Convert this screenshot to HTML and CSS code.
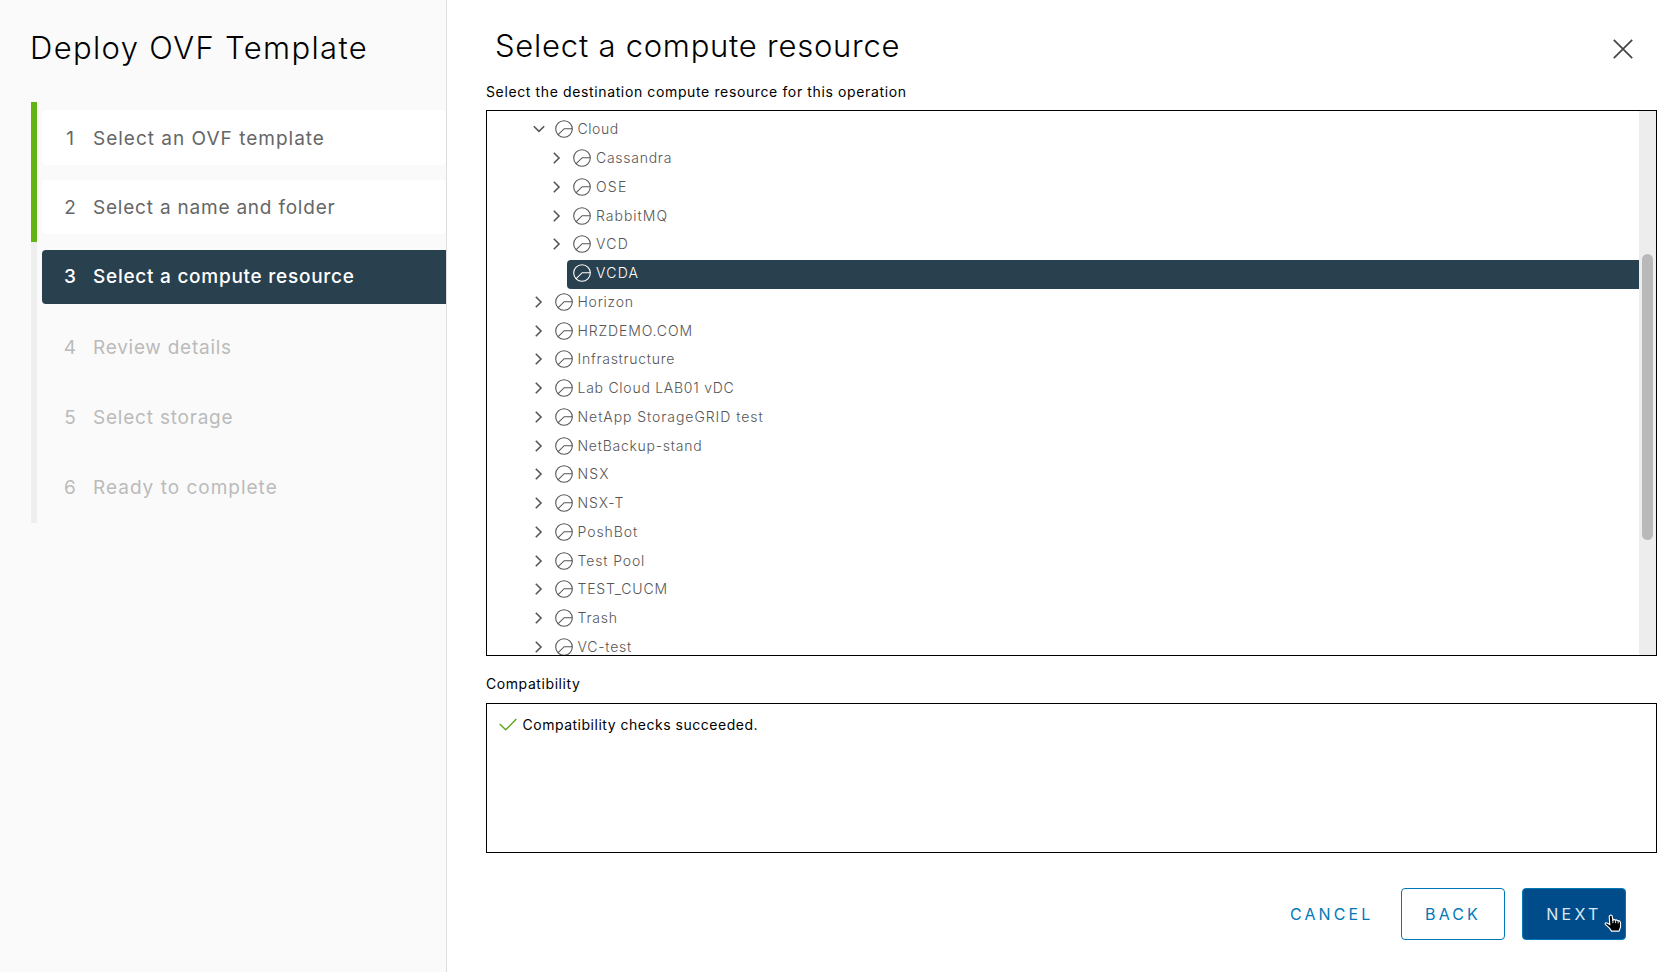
FILE: index.html
```html
<!DOCTYPE html>
<html lang="en">
<head>
<meta charset="utf-8">
<title>Deploy OVF Template</title>
<link rel="stylesheet" href="styles.css">
</head>
<body>
<svg class="sprite" aria-hidden="true">
  <symbol id="pool" viewBox="0 0 18 18"><circle cx="9" cy="9" r="8.3"/><path d="M2.9 14.8 9.2 8.7h8"/></symbol>
  <symbol id="right" viewBox="0 0 12 12"><path d="M2.8 .8 8 6l-5.2 5.2"/></symbol>
  <symbol id="down" viewBox="0 0 12 12"><path d="M.8 3.2 6 8.3l5.2-5.1"/></symbol>
</svg>
<div class="wizard">
  <aside class="sidebar">
    <h1 class="sidebar-title">Deploy OVF Template</h1>
    <ol class="steps">
      <li class="step done"><div class="card"><span class="num">1</span><span class="k10">Select an OVF template</span></div></li>
      <li class="step done"><div class="card"><span class="num">2</span><span class="k8">Select a name and folder</span></div></li>
      <li class="step active"><div class="card"><span class="num">3</span><span class="k7">Select a compute resource</span></div></li>
      <li class="step"><div class="card"><span class="num">4</span><span class="k7">Review details</span></div></li>
      <li class="step"><div class="card"><span class="num">5</span><span class="k8">Select storage</span></div></li>
      <li class="step"><div class="card"><span class="num">6</span><span class="k10">Ready to complete</span></div></li>
    </ol>
  </aside>
  <main class="main">
    <header class="head">
      <h2 class="page-title">Select a compute resource</h2>
      <svg class="close" viewBox="0 0 20 20"><path d="M.8.8l18.4 18.4M19.2.8.8 19.2"/></svg>
    </header>
    <p class="desc">Select the destination compute resource for this operation</p>
    <div class="tree">
      <div class="rows">
        <div class="row"><svg class="caret"><use href="#down"/></svg><div class="item"><svg class="pool"><use href="#pool"/></svg><span class="k6">Cloud</span></div></div>
        <div class="row child"><svg class="caret"><use href="#right"/></svg><div class="item"><svg class="pool"><use href="#pool"/></svg><span class="k7">Cassandra</span></div></div>
        <div class="row child"><svg class="caret"><use href="#right"/></svg><div class="item"><svg class="pool"><use href="#pool"/></svg><span class="k12">OSE</span></div></div>
        <div class="row child"><svg class="caret"><use href="#right"/></svg><div class="item"><svg class="pool"><use href="#pool"/></svg><span class="k10">RabbitMQ</span></div></div>
        <div class="row child"><svg class="caret"><use href="#right"/></svg><div class="item"><svg class="pool"><use href="#pool"/></svg><span class="k12">VCD</span></div></div>
        <div class="row child"><span class="caret"></span><div class="item selected"><svg class="pool"><use href="#pool"/></svg><span class="k12">VCDA</span></div></div>
        <div class="row"><svg class="caret"><use href="#right"/></svg><div class="item"><svg class="pool"><use href="#pool"/></svg><span class="k7">Horizon</span></div></div>
        <div class="row"><svg class="caret"><use href="#right"/></svg><div class="item"><svg class="pool"><use href="#pool"/></svg><span class="k9">HRZDEMO.COM</span></div></div>
        <div class="row"><svg class="caret"><use href="#right"/></svg><div class="item"><svg class="pool"><use href="#pool"/></svg><span class="k7">Infrastructure</span></div></div>
        <div class="row"><svg class="caret"><use href="#right"/></svg><div class="item"><svg class="pool"><use href="#pool"/></svg><span class="k7">Lab Cloud LAB01 vDC</span></div></div>
        <div class="row"><svg class="caret"><use href="#right"/></svg><div class="item"><svg class="pool"><use href="#pool"/></svg><span class="k95">NetApp StorageGRID test</span></div></div>
        <div class="row"><svg class="caret"><use href="#right"/></svg><div class="item"><svg class="pool"><use href="#pool"/></svg><span class="k7">NetBackup-stand</span></div></div>
        <div class="row"><svg class="caret"><use href="#right"/></svg><div class="item"><svg class="pool"><use href="#pool"/></svg><span class="k12">NSX</span></div></div>
        <div class="row"><svg class="caret"><use href="#right"/></svg><div class="item"><svg class="pool"><use href="#pool"/></svg><span class="k9">NSX-T</span></div></div>
        <div class="row"><svg class="caret"><use href="#right"/></svg><div class="item"><svg class="pool"><use href="#pool"/></svg><span class="k95">PoshBot</span></div></div>
        <div class="row"><svg class="caret"><use href="#right"/></svg><div class="item"><svg class="pool"><use href="#pool"/></svg><span class="k9">Test Pool</span></div></div>
        <div class="row"><svg class="caret"><use href="#right"/></svg><div class="item"><svg class="pool"><use href="#pool"/></svg><span class="k8">TEST_CUCM</span></div></div>
        <div class="row"><svg class="caret"><use href="#right"/></svg><div class="item"><svg class="pool"><use href="#pool"/></svg><span class="k8">Trash</span></div></div>
        <div class="row"><svg class="caret"><use href="#right"/></svg><div class="item"><svg class="pool"><use href="#pool"/></svg><span class="k8">VC-test</span></div></div>
      </div>
      <div class="track"><div class="thumb"></div></div>
    </div>
    <p class="compat-label">Compatibility</p>
    <div class="compat">
      <svg class="check" viewBox="0 0 18 13"><path d="M.7 6 6.7 11.8 17.3 1"/></svg>
      <span>Compatibility checks succeeded.</span>
    </div>
    <footer class="foot">
      <button class="btn link">CANCEL</button>
      <button class="btn outline">BACK</button>
      <button class="btn primary">NEXT
        <svg class="cursor" viewBox="0 0 18 19"><path d="M6.2 1.2c.9-.5 1.8 0 2 1l.7 4 1-.7 1.4.6 1.1-.2 1.3.8 1.3-.2 1.5 1.6v5l-1.5 4H7.5l-2-3-4.2-3.7c-.7-1.2.5-2 1.6-1.5l2.9 1.6L5.2 2.5c0-.6.4-1 1-1.3z"/><path class="knuckles" d="M8.9 6v3.2M11.6 6.4v2.8M14.2 7v2.4"/></svg>
      </button>
    </footer>
  </main>
</div>
</body>
</html>
```
FILE: styles.css
```css
* { box-sizing: border-box; }
body { margin: 0; background: #fff; color: #000; font: 400 14px/20px Inter, sans-serif; overflow: hidden; }
h1, h2, p, ol { margin: 0; padding: 0; }
.sprite { display: none; }
svg { fill: none; stroke: currentColor; flex: none; }
.wizard { display: flex; height: 972px; }

.sidebar { width: 447px; flex: none; background: #fafafa; border-right: 1px solid #ddd; padding: 29px 0 0 31px; }
.sidebar-title { margin-left: -1px; font-size: 31px; line-height: 38px; font-weight: 300; letter-spacing: 1.35px; height: 73px; white-space: nowrap; }
.steps { list-style: none; }
.step { height: 70px; padding: 8px 0 0 5px; border-left: 6px solid #eee; color: #bbb; font-size: 19px; }
.step:last-child { height: 71px; }
.step.done { border-color: #60b515; color: #666; }
.card { height: 54px; padding-top: 2px; border-radius: 4px; display: flex; align-items: center; white-space: nowrap; }
.done .card { background: #fff; }
.done:first-child .card { height: 55px; }
.active .card { background: #29404e; color: #fff; border-radius: 4px 0 0 4px; font-weight: 500; padding-top: 0; }
.num { width: 28px; margin: 0 9px 0 14px; text-align: center; }

.main { flex: 1; min-width: 0; padding: 27px 1px 0 39px; }
.head { display: flex; justify-content: space-between; height: 55px; padding: 0 24px 0 9px; }
.page-title { font-size: 31px; line-height: 38px; font-weight: 300; letter-spacing: .76px; white-space: nowrap; }
.close { width: 20px; height: 20px; margin-top: 12px; stroke: #454545; stroke-width: 1.7; }
.desc { height: 28px; letter-spacing: .626px; }

.tree { height: 546px; border: 1px solid #000; display: flex; overflow: hidden; color: #565656; font-weight: 300; }
.rows { flex: 1; padding-top: 5px; }
.row { height: 28.76px; display: flex; align-items: center; padding-left: 46px; }
.row.child { padding-left: 64px; }
.caret { width: 12px; height: 12px; margin: 0 4px 2px 0; stroke-width: 1.6; stroke: #565656; }
.item { flex: 1; height: 100%; display: flex; align-items: center; gap: 5px; padding: 0 0 2px 5.5px; white-space: nowrap; }
.child .item { padding-left: 6px; }
.item.selected { background: #29404e; color: #fff; border-radius: 4px 0 0 4px; }
.pool { width: 18px; height: 18px; stroke-width: 1.1; }
.track { width: 17px; background: #ededed; padding: 143px 3px 0; }
.thumb { width: 11px; height: 286px; border-radius: 6px; background: #b9b9b9; }

.compat-label { margin-top: 18px; height: 29px; letter-spacing: .58px; }
.compat { height: 150px; border: 1px solid #000; padding: 11px 0 0 11.5px; display: flex; align-items: flex-start; gap: 6px; letter-spacing: .514px; }
.check { width: 18px; height: 13px; margin-top: 3px; stroke: #62a420; stroke-width: 1.4; }

.foot { display: flex; justify-content: flex-end; gap: 17px; padding: 35px 31px 0 0; }
.btn { height: 52px; width: 104px; padding: 0; border: 1px solid #0079b8; border-radius: 4px; background: none; color: #0079b8; font: 400 16px/20px Inter, sans-serif; letter-spacing: 3.1px; position: relative; }
.link { border-color: transparent; width: 112px; margin-right: -17px; text-align: left; }
.primary { background: #004b8a; color: #d9e9f3; letter-spacing: 3.3px; }
.cursor { position: absolute; left: 81px; top: 25px; width: 18px; height: 19px; fill: #000; stroke: #fff; stroke-width: 1.1; }
.knuckles { stroke-width: .9; }

.k6 { letter-spacing: .58px; }
.k7 { letter-spacing: .74px; }
.k8 { letter-spacing: .79px; }
.k9 { letter-spacing: .88px; }
.k95 { letter-spacing: .95px; }
.k10 { letter-spacing: 1px; }
.k12 { letter-spacing: 1.24px; }
```
